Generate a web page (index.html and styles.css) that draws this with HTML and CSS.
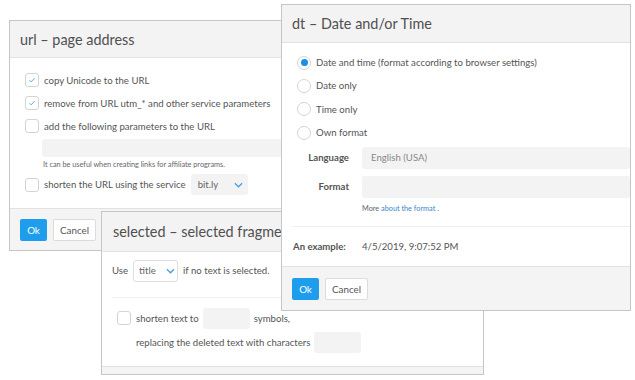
FILE: index.html
```html
<!DOCTYPE html>
<html>
<head>
<meta charset="utf-8">
<link rel="stylesheet" href="styles.css">
</head>
<body>
<div class="desk">

  <section class="win win-url">
    <header class="win-head">url – page address</header>
    <div class="win-body body-url">
      <label class="row"><span class="cb on"><svg viewBox="0 0 14 14"><path d="M4 7.2l2 2 4-4.4"/></svg></span>copy Unicode to the URL</label>
      <label class="row"><span class="cb on"><svg viewBox="0 0 14 14"><path d="M4 7.2l2 2 4-4.4"/></svg></span>remove from URL utm_* and other service parameters</label>
      <label class="row"><span class="cb"></span>add the following parameters to the URL</label>
      <div class="indent">
        <div class="field wide"></div>
        <div class="help">It can be useful when creating links for affiliate programs.</div>
      </div>
      <label class="row row-short"><span class="cb"></span>shorten the URL using the service <span class="select sel-bitly">bit.ly<svg class="chev" viewBox="0 0 10 6"><path d="M1 1l4 4 4-4"/></svg></span></label>
    </div>
    <footer class="win-foot">
      <button class="btn ok">Ok</button><button class="btn cancel">Cancel</button>
    </footer>
  </section>

  <section class="win win-sel">
    <header class="win-head">selected – selected fragment</header>
    <div class="win-body body-sel">
      <div class="row use">Use <span class="select sel-title">title<svg class="chev" viewBox="0 0 10 6"><path d="M1 1l4 4 4-4"/></svg></span> if no text is selected.</div>
      <div class="sep"></div>
      <div class="shorten">
        <div class="row"><span class="cb"></span>shorten text to <span class="field small"></span> symbols,</div>
        <div class="row sub">replacing the deleted text with characters <span class="field small"></span></div>
      </div>
    </div>
    <footer class="win-foot thin"></footer>
  </section>

  <section class="win win-dt">
    <header class="win-head">dt – Date and/or Time</header>
    <div class="win-body body-dt">
      <div class="radios">
        <label class="row"><span class="rb on"></span>Date and time (format according to browser settings)</label>
        <label class="row"><span class="rb"></span>Date only</label>
        <label class="row"><span class="rb"></span>Time only</label>
        <label class="row"><span class="rb"></span>Own format</label>
      </div>
      <div class="form">
        <div class="frow"><span class="flabel">Language</span><span class="field fill muted">English (USA)</span></div>
        <div class="frow"><span class="flabel">Format</span><span class="field fill"></span></div>
        <div class="frow frow-help"><span class="flabel"></span><span class="help">More <a class="link">about the format</a> .</span></div>
      </div>
      <div class="sep"></div>
      <div class="frow example"><span class="flabel left">An example:</span><span>4/5/2019, 9:07:52 PM</span></div>
    </div>
    <footer class="win-foot">
      <button class="btn ok">Ok</button><button class="btn cancel">Cancel</button>
    </footer>
  </section>

</div>
</body>
</html>
```

FILE: styles.css
```css
* { box-sizing: border-box; }
html, body { margin: 0; padding: 0; background: #fff; }
body {
  font-family: Lato, "Open Sans", sans-serif;
  font-size: 9.6px;
  color: #555;
  width: 635px;
  height: 380px;
  overflow: hidden;
}
.desk { position: relative; width: 635px; height: 380px; }

.win {
  position: absolute;
  background: #fff;
  border: 1px solid #c6c6c6;
  display: flex;
  flex-direction: column;
  overflow: hidden;
}
.win-head {
  flex: none;
  background: #f3f3f3;
  border-bottom: 1px solid #e2e2e2;
  font-size: 14.4px;
  color: #505050;
  display: flex;
  align-items: center;
  padding-left: 10px;
  white-space: nowrap;
}
.win-body { flex: 1; min-height: 0; overflow: hidden; }
.win-foot {
  flex: none;
  background: #f4f4f4;
  border-top: 1px solid #e2e2e2;
  display: flex;
  align-items: center;
  gap: 6px;
  padding: 0 10px;
}

.win-url { left: 9px; top: 20px; width: 400px; height: 231px; }
.win-url .win-head { height: 37px; }
.win-url .win-foot { height: 42px; }
.body-url { padding: 10.5px 15px 0 15px; display: flex; flex-direction: column; }

.win-dt { left: 281px; top: 4px; width: 350px; height: 307px; }
.win-dt .win-head { height: 38px; }
.win-dt .win-foot { height: 44px; }

.win-sel { left: 101px; top: 211px; width: 383px; height: 164px; }
.win-sel .win-head { height: 40px; padding-left: 11px; }
.win-sel .win-foot.thin { height: 8px; }

.row { display: flex; align-items: center; white-space: nowrap; flex: none; }
.body-url .row { height: 23px; }
.body-url .row-short { height: 24px; }

.cb {
  width: 14px; height: 14px;
  border: 1px solid #d4d4d4;
  border-radius: 3px;
  background: #fff;
  margin-right: 5px;
  display: inline-flex;
  flex: none;
}
.cb svg { width: 12px; height: 12px; }
.cb path { fill: none; stroke: #55a8e8; stroke-width: 1.1; }

.rb {
  width: 14px; height: 14px;
  border: 1px solid #d4d4d4;
  border-radius: 50%;
  margin-right: 5px;
  flex: none;
  display: inline-flex;
  align-items: center;
  justify-content: center;
}
.rb.on::after {
  content: "";
  width: 7px; height: 7px;
  border-radius: 50%;
  background: #1b8ee6;
}

.indent { padding-left: 17px; display: flex; flex-direction: column; flex: none; }
.field {
  background: #f3f3f3;
  border-radius: 3px;
  display: inline-flex;
  align-items: center;
  flex: none;
}
.field.wide { height: 18px; width: 400px; margin-top: 1px; }
.help { font-size: 7.3px; color: #666; }
.body-url .indent .help { padding-left: 1px; height: 16px; display: flex; align-items: center; }

.select {
  display: inline-flex;
  align-items: center;
  border-radius: 3px;
  font-size: 9.6px;
  color: #666;
}
.sel-bitly { background: #f3f3f3; width: 57px; height: 21px; padding-left: 7px; margin-left: 5px; }
.sel-bitly .chev { margin-left: 16px; }
.chev { width: 9px; height: 6px; }
.chev path { fill: none; stroke: #4a9fe0; stroke-width: 1.4; }

.btn {
  font-family: inherit;
  font-size: 9.8px;
  height: 22px;
  border-radius: 2px;
  padding: 0;
  cursor: pointer;
}
.btn.ok { width: 27px; background: #1e9ded; color: #fff; border: none; }
.btn.cancel { width: 43px; background: #fff; color: #555; border: 1px solid #dcdcdc; }

/* selected window */
.body-sel { padding: 7.5px 0 0 10px; display: flex; flex-direction: column; }
.use { height: 22px; }
.sel-title {
  border: 1px solid #dedede;
  height: 22px;
  width: 45px;
  padding-left: 5px;
  margin: 0 5px 0 5px;
  background: #fff;
}
.sel-title .chev { margin-left: 10px; }
.sep { height: 1px; background: #efefef; flex: none; }
.body-sel .sep { margin-top: 15px; }
.shorten { padding: 8.5px 0 0 5px; display: flex; flex-direction: column; }
.shorten .row { height: 24px; }
.shorten .row.sub { padding-left: 19px; }
.field.small { width: 47px; height: 21px; margin: 0 4px 0 4px; }
.shorten .row.sub .field.small { margin-left: 4px; }

/* dt window */
.body-dt { padding: 8px 0 0 10px; display: flex; flex-direction: column; }
.radios { display: flex; flex-direction: column; padding-left: 5px; flex: none; }
.radios .row { height: 23.3px; }
.form { display: flex; flex-direction: column; margin-top: -1px; flex: none; }
.frow { display: flex; align-items: center; white-space: nowrap; flex: none; }
.form .frow { height: 29px; }
.form .frow-help { height: 15px; align-items: center; }
.flabel {
  width: 57px;
  text-align: right;
  font-weight: 700;
  color: #555;
  margin-right: 13px;
  flex: none;
}
.field.fill { flex: 1; height: 22px; padding-left: 9px; }
.muted { color: #888; }
.link { color: #3a87c9; }
.body-dt .sep { margin-top: 9.5px; }
.example { height: 38px; padding-top: 2px; }
.flabel.left { text-align: left; padding-left: 1px; }
```
